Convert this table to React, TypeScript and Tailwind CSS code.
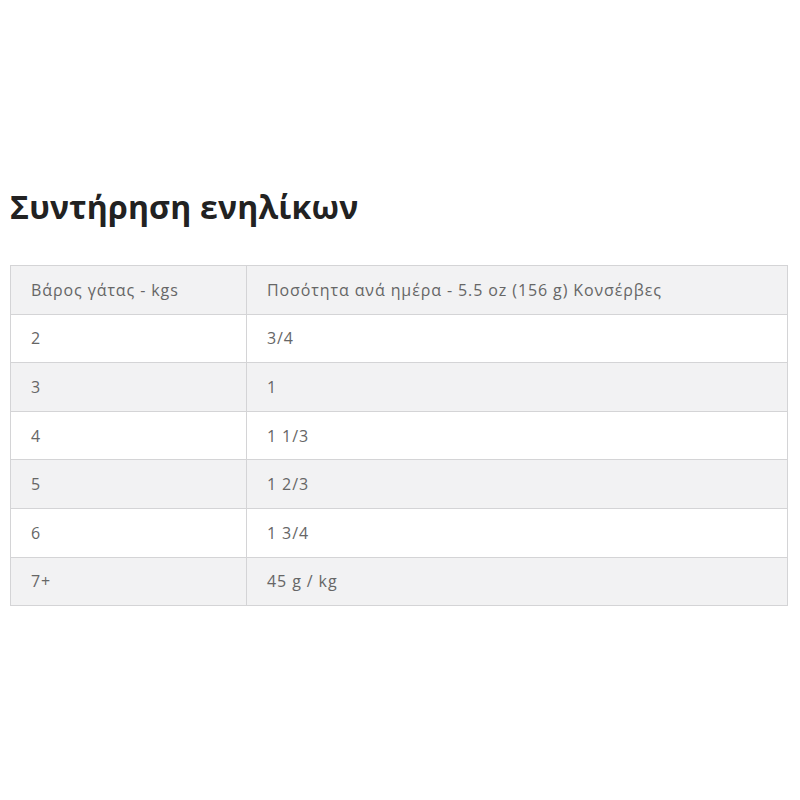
const rows: [string, string][] = [
  ["Βάρος γάτας - kgs", "Ποσότητα ανά ημέρα - 5.5 oz (156 g) Κονσέρβες"],
  ["2", "3/4"],
  ["3", "1"],
  ["4", "1 1/3"],
  ["5", "1 2/3"],
  ["6", "1 3/4"],
  ["7+", "45 g / kg"],
];

export default function App() {
  return (
    <div className="w-[800px] h-[800px] bg-white pt-[185px] pl-[10px] pr-[12px] font-['Open_Sans',sans-serif]">
      <h2 className="text-[32px] font-bold text-[#222] leading-[44px] mb-[36px] tracking-[0.2px]">
        Συντήρηση ενηλίκων
      </h2>
      <table className="w-[778px] border-collapse border border-[#cfcfd1] text-[16px] tracking-[0.9px] text-[#666]">
        <tbody>
          {rows.map((r, i) => (
            <tr key={i} className={i % 2 === 0 ? "bg-[#f2f2f3]" : "bg-white"}>
              <td className="w-[236px] h-[48.6px] border border-[#d4d4d6] pl-[20px] align-middle">{r[0]}</td>
              <td className="h-[48.6px] border border-[#d4d4d6] pl-[20px] align-middle">{r[1]}</td>
            </tr>
          ))}
        </tbody>
      </table>
    </div>
  );
}
